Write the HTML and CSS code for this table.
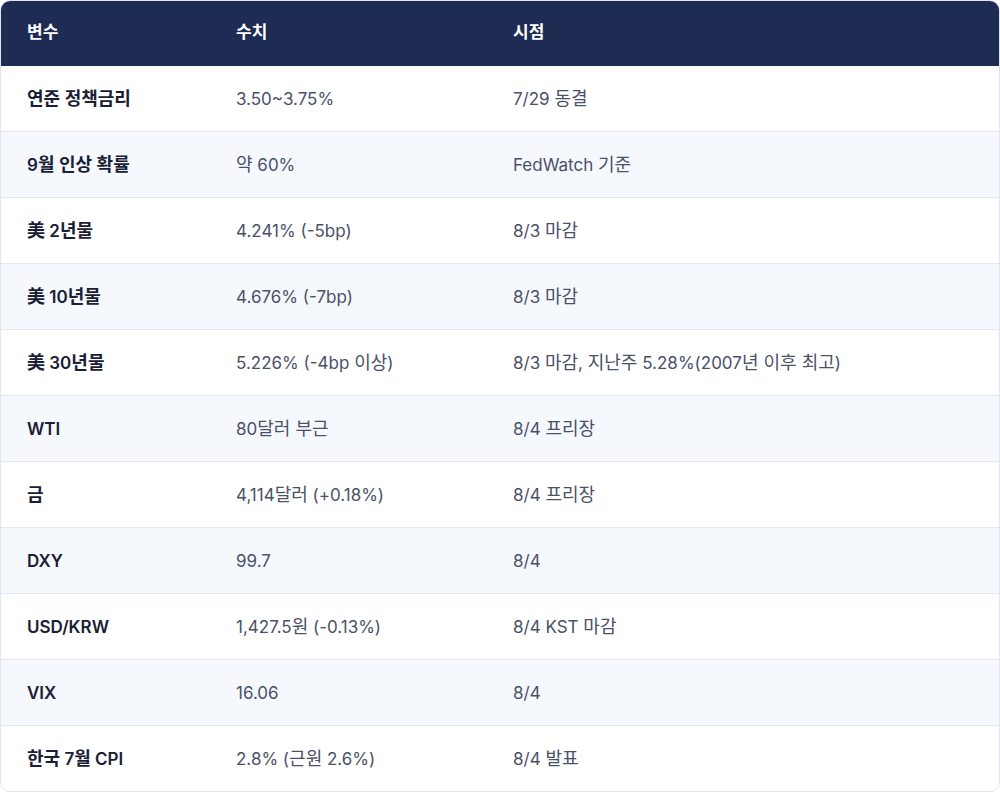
FILE: index.html
```html
<!DOCTYPE html>
<html lang="ko">
<head>
<meta charset="utf-8">
<link rel="stylesheet" href="styles.css">
</head>
<body>
<div class="table">
  <div class="row head"><div>변수</div><div>수치</div><div>시점</div></div>
  <div class="row"><div class="key"><span class="k">연준 정책금리</span></div><div>3.50~3.75%</div><div>7/29 <span class="k">동결</span></div></div>
  <div class="row alt"><div class="key">9<span class="k">월 인상 확률</span></div><div><span class="k">약</span> 60%</div><div>FedWatch <span class="k">기준</span></div></div>
  <div class="row"><div class="key"><span class="k">美</span> 2<span class="k">년물</span></div><div>4.241% (-5bp)</div><div>8/3 <span class="k">마감</span></div></div>
  <div class="row alt"><div class="key"><span class="k">美</span> 10<span class="k">년물</span></div><div>4.676% (-7bp)</div><div>8/3 <span class="k">마감</span></div></div>
  <div class="row"><div class="key"><span class="k">美</span> 30<span class="k">년물</span></div><div>5.226% (-4bp <span class="k">이상</span>)</div><div>8/3 <span class="k">마감</span>, <span class="k">지난주</span> 5.28%(2007<span class="k">년 이후 최고</span>)</div></div>
  <div class="row alt"><div class="key">WTI</div><div>80<span class="k">달러 부근</span></div><div>8/4 <span class="k">프리장</span></div></div>
  <div class="row"><div class="key"><span class="k">금</span></div><div>4,114<span class="k">달러</span> (+0.18%)</div><div>8/4 <span class="k">프리장</span></div></div>
  <div class="row alt"><div class="key">DXY</div><div>99.7</div><div>8/4</div></div>
  <div class="row"><div class="key">USD/KRW</div><div>1,427.5<span class="k">원</span> (-0.13%)</div><div>8/4 KST <span class="k">마감</span></div></div>
  <div class="row alt"><div class="key">VIX</div><div>16.06</div><div>8/4</div></div>
  <div class="row last"><div class="key"><span class="k">한국</span> 7<span class="k">월</span> CPI</div><div>2.8% (<span class="k">근원</span> 2.6%)</div><div>8/4 <span class="k">발표</span></div></div>
</div>
</body>
</html>
```
FILE: styles.css
```css
html, body {
  margin: 0;
  padding: 0;
  background: #ffffff;
}
body {
  font-family: Inter, "Noto Sans CJK KR", sans-serif;
  font-size: 17px;
  color: #4a5168;
}
.table {
  width: 1000px;
  height: 792px;
  box-sizing: border-box;
  border: 1px solid #e1e5ef;
  border-radius: 10px;
  overflow: hidden;
}
.row {
  display: grid;
  grid-template-columns: 209px 277px 1fr;
  align-items: center;
  height: 66px;
  box-sizing: border-box;
  padding: 0 26px;
  border-bottom: 1px solid #e3e8f2;
  background: #ffffff;
  line-height: 24px;
}
.row.alt {
  background: #f5f8fd;
}
.row.last {
  border-bottom: none;
  height: 65px;
}
.row.head {
  background: #1e2c53;
  color: #ffffff;
  font-size: 17px;
  font-weight: 600;
  border-bottom: none;
  height: 66px;
  margin: -1px -1px 0 -1px;
  padding: 0 27px 2px 27px;
}
.k {
  font-size: 18px;
}
.key {
  color: #1a2034;
  font-weight: 600;
}
```
